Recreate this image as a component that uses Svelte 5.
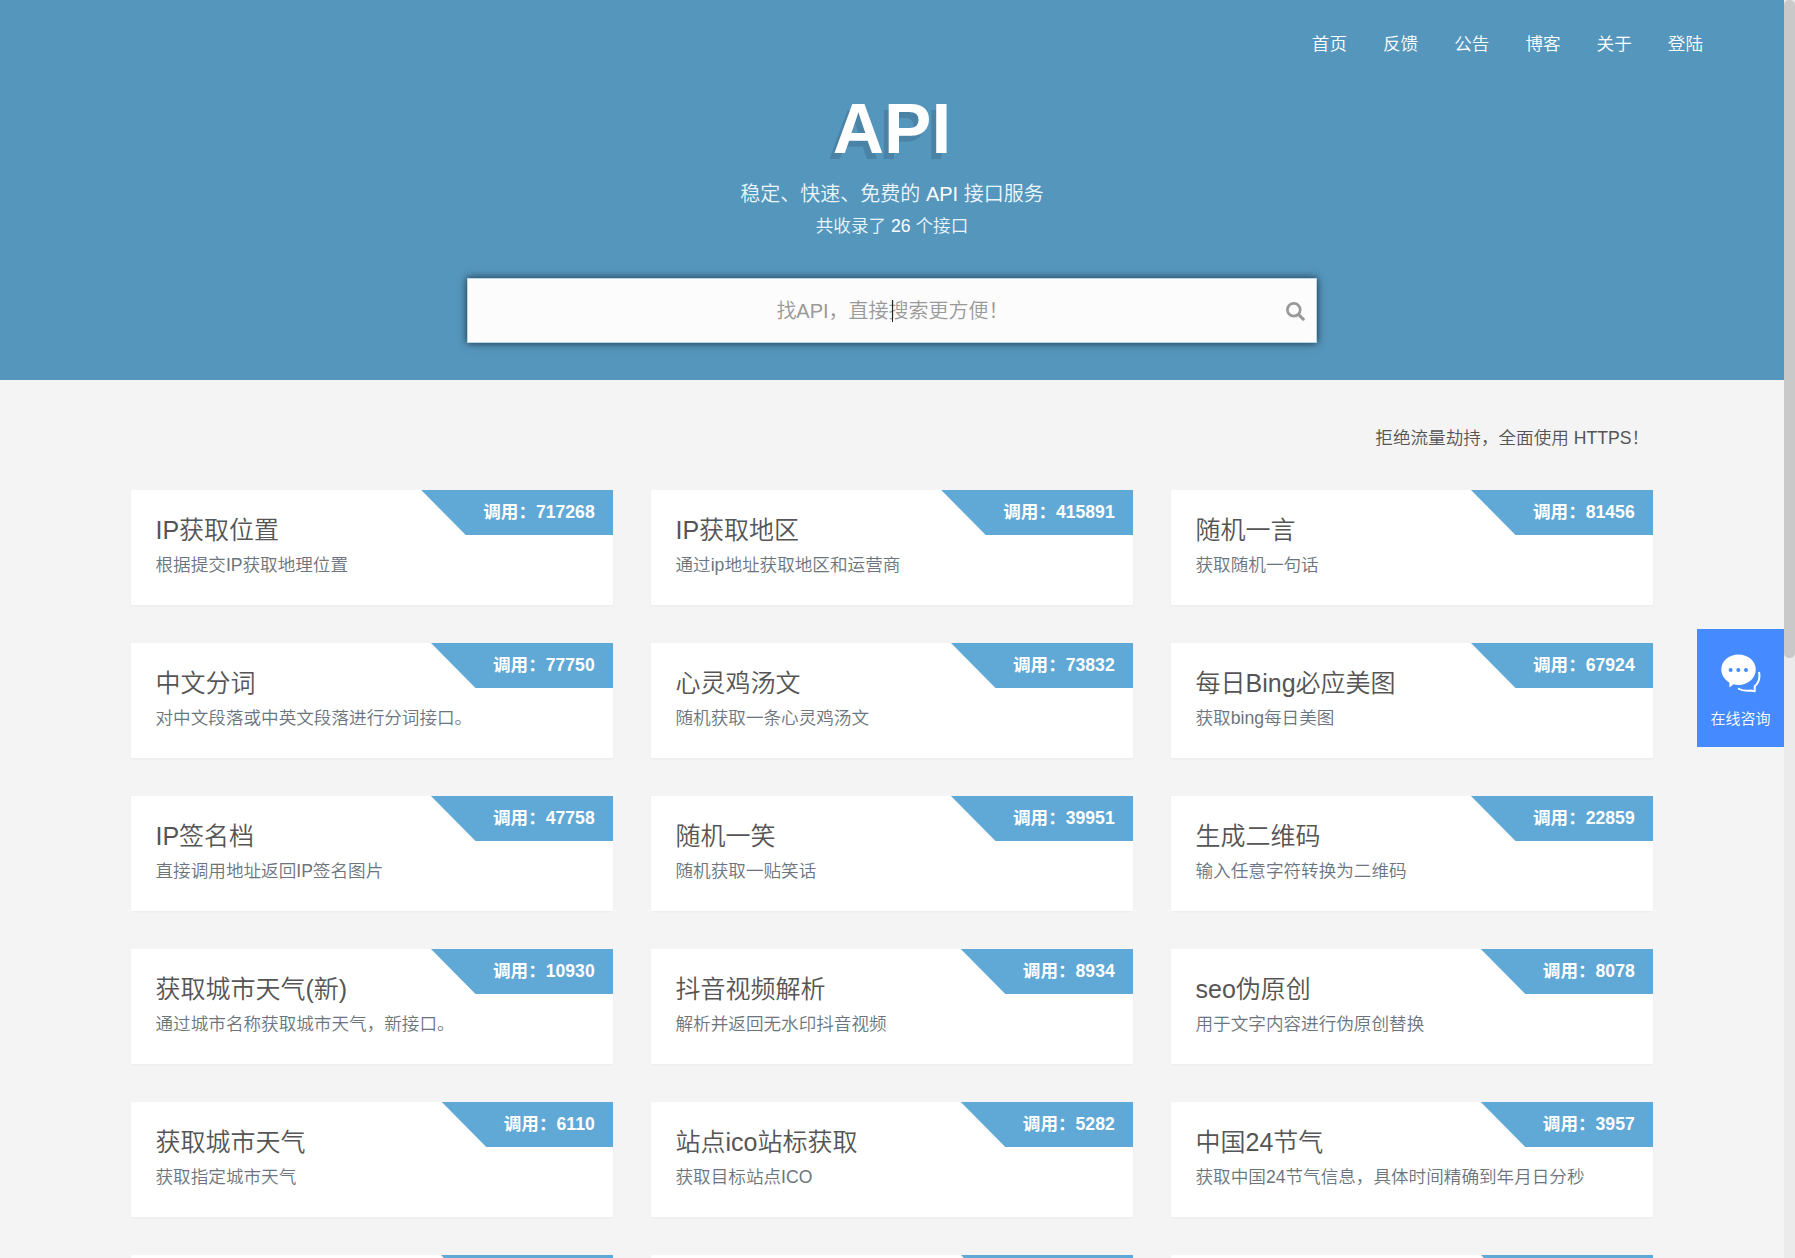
<script lang="ts">
  interface Api {
    name: string;
    desc: string;
    calls: number;
  }

  const links = ['首页', '反馈', '公告', '博客', '关于', '登陆'];

  const apis: Api[] = [
    { name: 'IP获取位置', desc: '根据提交IP获取地理位置', calls: 717268 },
    { name: 'IP获取地区', desc: '通过ip地址获取地区和运营商', calls: 415891 },
    { name: '随机一言', desc: '获取随机一句话', calls: 81456 },
    { name: '中文分词', desc: '对中文段落或中英文段落进行分词接口。', calls: 77750 },
    { name: '心灵鸡汤文', desc: '随机获取一条心灵鸡汤文', calls: 73832 },
    { name: '每日Bing必应美图', desc: '获取bing每日美图', calls: 67924 },
    { name: 'IP签名档', desc: '直接调用地址返回IP签名图片', calls: 47758 },
    { name: '随机一笑', desc: '随机获取一贴笑话', calls: 39951 },
    { name: '生成二维码', desc: '输入任意字符转换为二维码', calls: 22859 },
    { name: '获取城市天气(新)', desc: '通过城市名称获取城市天气，新接口。', calls: 10930 },
    { name: '抖音视频解析', desc: '解析并返回无水印抖音视频', calls: 8934 },
    { name: 'seo伪原创', desc: '用于文字内容进行伪原创替换', calls: 8078 },
    { name: '获取城市天气', desc: '获取指定城市天气', calls: 6110 },
    { name: '站点ico站标获取', desc: '获取目标站点ICO', calls: 5282 },
    { name: '中国24节气', desc: '获取中国24节气信息，具体时间精确到年月日分秒', calls: 3957 },
  ];

  // the next row only peeks in at the bottom of the window
  const nextRow = [0, 1, 2];
</script>

<div class="window">
  <div class="page">
    <header>
      <nav>
        {#each links as link}
          <a href="#/">{link}</a>
        {/each}
      </nav>
      <h1>API</h1>
      <p class="slogan">稳定、快速、免费的 <b>API</b> 接口服务</p>
      <p class="count">共收录了 <b>26</b> 个接口</p>
      <div class="search">
        <div class="field">找API，直接搜索更方便！<i class="caret"></i></div>
        <svg class="search-icon" viewBox="0 0 19 19" width="19" height="19">
          <circle cx="7.8" cy="7.8" r="6.4" fill="none" stroke="#999" stroke-width="2.7" />
          <path d="M12.6 12.6l4.6 4.6" stroke="#999" stroke-width="3.1" stroke-linecap="round" />
        </svg>
      </div>
    </header>

    <main>
      <p class="notice">拒绝流量劫持，全面使用 HTTPS！</p>
      <div class="grid">
        {#each apis as api}
          <section class="card">
            <span class="badge">调用：{api.calls}</span>
            <h2>{api.name}</h2>
            <p>{api.desc}</p>
          </section>
        {/each}
        {#each nextRow as n (n)}
          <section class="card"><span class="badge short"></span></section>
        {/each}
      </div>
    </main>
  </div>

  <aside class="chat">
    <svg viewBox="0 0 40 39" width="40" height="39">
      <path d="M17.5 .5C27 .5 34.8 7 34.8 15.5S27 31 17.5 31c-1.8 0-3.400-.2-5-.7L8.600 33.600 8.200 28.400C3.500 25.600.3 21 .3 15.500.3 7 8 .5 17.500 .5z" fill="#fff" />
      <g fill="#468aff">
        <circle cx="9.6" cy="16" r="2" />
        <circle cx="17.3" cy="16" r="2" />
        <circle cx="25" cy="16" r="2" />
      </g>
      <path d="M38 18c1.200 6 .2 10.500-4.300 14.200l.1 5.100-4-.7c-4.800.7-9.300-.1-12.800-2.100" fill="none" stroke="#fff" stroke-width="2" stroke-linejoin="round" />
    </svg>
    <span>在线咨询</span>
  </aside>
  <div class="scrollbar"><div class="thumb"></div></div>
</div>

<style>
  :global(body) { overflow: hidden; }
  .window { position: relative; display: flex; width: 100vw; height: 100vh; overflow: hidden; background: #f4f4f4; font-family: "Liberation Sans", "Noto Sans CJK SC", sans-serif; font-size: 17.6px; font-weight: 350; }
  .page { flex: 1; min-width: 0; height: 100%; overflow: hidden; }
  h1, h2, p { margin: 0; font-weight: inherit; }

  header { display: flex; flex-direction: column; align-items: center; box-sizing: border-box; height: 380px; background: #5596bd; color: #fff; }
  nav { align-self: flex-end; display: flex; gap: 36px; margin-right: 81px; padding-top: 31px; line-height: 27px; }
  nav a { color: #fff; text-decoration: none; }
  h1 { margin-top: 31px; font-size: 71px; line-height: 80px; font-weight: bold; text-shadow: -5px 6px 0 rgba(0, 0, 0, 0.12); }
  .slogan { margin-top: 10px; font-size: 20px; line-height: 30px; color: #eaf6fc; }
  .count { margin-top: 4px; line-height: 27px; color: #eaf6fc; }
  b { font-weight: normal; color: #fff; }

  .search { display: flex; align-items: center; box-sizing: border-box; width: 850px; height: 65px; margin-top: 38px; padding-right: 11px; background: #fcfcfc; border: 1px solid #b9d6e6; box-shadow: 0 0 8px rgba(0, 0, 0, 0.7); }
  .field { position: relative; flex: 1; padding-left: 31px; font-size: 20px; line-height: 30px; text-align: center; color: #999; }
  .caret { position: absolute; left: 424px; top: 4px; width: 1px; height: 22px; background: #222; }
  .search-icon { margin-top: 1px; }

  main { padding: 45px 131px 0; }
  .notice { padding-right: 4px; line-height: 27px; text-align: right; color: #555; }
  .grid { display: grid; grid-template-columns: repeat(3, 482px); grid-auto-rows: 115px; gap: 38px; margin-top: 38px; }
  .card { position: relative; box-sizing: border-box; padding: 22px 24.5px; background: #fff; box-shadow: 0 1px 2px rgba(0, 0, 0, 0.04); }
  .card h2 { font-size: 25px; line-height: 37px; color: #555; }
  .card p { margin-top: 3px; line-height: 27px; color: #6c757d; }
  .badge { position: absolute; top: 0; right: 0; height: 45px; box-sizing: border-box; padding: 0 18.3px 0 62px; line-height: 44px; font-weight: bold; color: #fff; background: #60a9d6; clip-path: polygon(0 0, 100% 0, 100% 100%, 44.5px 100%); }
  .badge.short { width: 172px; }

  .chat { position: absolute; right: 11px; top: 629px; display: flex; flex-direction: column; align-items: center; box-sizing: border-box; width: 87px; height: 118px; padding-top: 25px; background: #468aff; color: #fff; font-size: 15px; }
  .chat span { margin-top: 15px; line-height: 22px; }
  .scrollbar { width: 11px; background: #ebebeb; }
  .thumb { height: 658px; border-radius: 5px; background: #c9c9c9; }
</style>
